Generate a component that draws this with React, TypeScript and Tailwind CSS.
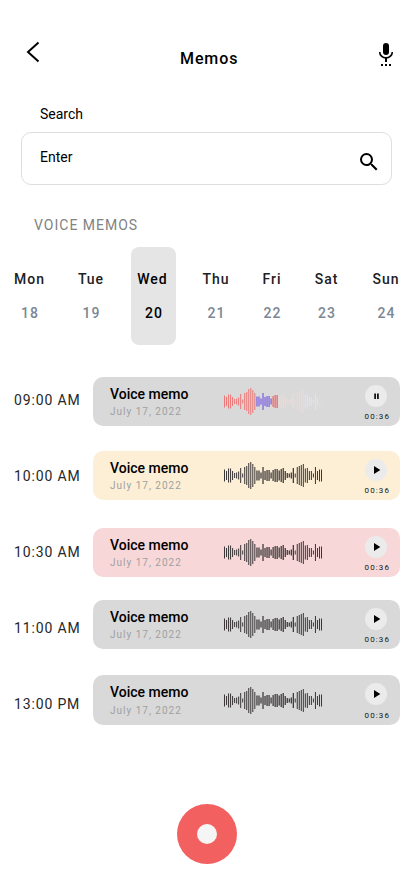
const DAYS = [
  { name: 'Mon', date: '18', place: 'w-[31px]' },
  { name: 'Tue', date: '19', place: 'w-[28px] ml-[32px]' },
  { name: 'Wed', date: '20', place: 'w-[45px] ml-[26px]', active: true },
  { name: 'Thu', date: '21', place: 'w-[28px] ml-[26px]' },
  { name: 'Fri', date: '22', place: 'w-[20px] ml-[32px]' },
  { name: 'Sat', date: '23', place: 'w-[25px] ml-[32px]' },
  { name: 'Sun', date: '24', place: 'w-[28px] ml-[33px]' },
];

const TIMES = ['09:00 AM', '10:00 AM', '10:30 AM', '11:00 AM', '13:00 PM'];

type MemoProps = { style: string; playing?: boolean; tall?: boolean };

const MEMOS: MemoProps[] = [
  { style: 'bg-[#d9d9d9] h-[49px]', playing: true },
  { style: 'bg-[#fcefd6] h-[49px] mt-[25px]' },
  { style: 'bg-[#f8d7d9] h-[49px] mt-[28px]' },
  { style: 'bg-[#d9d9d9] h-[49px] mt-[23px]' },
  { style: 'bg-[#d9d9d9] h-[50px] mt-[26px]', tall: true },
];

const BARS = [
  12, 9, 14, 14, 9, 5, 6, 8, 15, 4, 17, 19, 25, 27, 23, 17, 10, 10, 6, 17, 9, 11, 11, 6, 11,
  13, 13, 10, 13, 15, 9, 5, 4, 6, 15, 4, 17, 19, 21, 23, 14, 15, 9, 9, 4, 17, 9, 12, 12,
];

function barColor(i: number, playing: boolean) {
  if (!playing) return '#3a3637';
  if (i < 16) return '#ec7777';
  if (i < 24) return '#7d62e0';
  if (i < 27) return '#ef6464';
  if (i < 40) return '#ecd9d7';
  if (i < 47) return '#e6defc';
  return '#f0d3d3';
}

function Wave({ playing, tall }: { playing: boolean; tall: boolean }) {
  return (
    <svg width="99" height="28" viewBox="0 0 99 28" className={`ml-[35px] shrink-0 ${tall ? 'mt-[11px]' : 'mt-[10px]'}`}>
      {BARS.map((h, i) => (
        <rect key={i} x={i * 2.0208} y={14.5 - h / 2} width={i > 15 && i < 35 ? 1.25 : 1} height={h} fill={barColor(i, playing)} />
      ))}
    </svg>
  );
}

function Memo({ style, playing = false, tall = false }: MemoProps) {
  return (
    <article className={`flex w-[307px] rounded-[10px] pl-[17px] ${style}`}>
      <div className="w-[79px] shrink-0 whitespace-nowrap pt-[9px]">
        <h3 className="text-[14px] font-medium leading-[17px] text-black">Voice memo</h3>
        <p className={`text-[10px] leading-[12px] tracking-[1px] text-[#a0a0a0] ${tall ? 'mt-[4px]' : 'mt-[3px]'}`}>July 17, 2022</p>
      </div>
      <Wave playing={playing} tall={tall} />
      <div className="ml-[42px] flex w-[28px] flex-col items-start pt-[8px]">
        <button className="flex size-[22px] items-center justify-center rounded-full bg-[#ebebeb]">
          {playing ? (
            <svg width="22" height="22" viewBox="0 0 22 22">
              <path d="M9.2 8.5h1.8v5.5H9.2zM12 8.5h1.8v5.5H12z" fill="#151515" />
            </svg>
          ) : (
            <svg width="22" height="22" viewBox="0 0 22 22">
              <path d="M9 7v8l6.3-4z" fill="#000" />
            </svg>
          )}
        </button>
        <span className={`-ml-[0.4px] text-[8px] leading-[10px] tracking-[1.1px] text-[#151515] ${tall ? 'mt-[6px]' : 'mt-[5px]'}`}>00:36</span>
      </div>
    </article>
  );
}

export default function App() {
  return (
    <main className="h-[895px] w-[417px] overflow-hidden bg-white font-[Roboto,sans-serif] text-black">
      <header className="flex h-[104px] items-start pl-[25px]">
        <button className="mt-[41px]">
          <svg width="16" height="22" viewBox="0 0 16 22" fill="none" stroke="#000" strokeWidth="2">
            <path d="M13.5 1.5 3 11l10.5 9.5" />
          </svg>
        </button>
        <h1 className="ml-[139px] mt-[49px] w-[60px] text-[16px] font-medium leading-[19px] tracking-[0.9px]">Memos</h1>
        <button className="ml-[134px] mt-[42px]">
          <svg width="24" height="25" viewBox="0 0 24 25">
            <rect x="9" y="1" width="6" height="12" rx="3" />
            <path d="M5.7 10a6.3 5.9 0 0 0 12.6 0" fill="none" stroke="#000" strokeWidth="1.6" />
            <path d="M11 16h2v4h-2zM7 22h2v2H7zM11 22h2v2h-2zM15 22h2v2h-2z" />
          </svg>
        </button>
      </header>

      <section className="ml-[21px] w-[371px]">
        <label className="ml-[19px] mt-[2px] block text-[14px] leading-[17px]">Search</label>
        <div className="mt-[9px] flex h-[53px] items-start rounded-[10px] border border-[#dedede] pl-[18px]">
          <span className="mt-[16px] w-[317px] text-[14px] leading-[17px]">Enter</span>
          <svg width="24" height="24" viewBox="0 0 24 24" className="mt-[17px] shrink-0">
            <path d="M15.5 14h-.79l-.28-.27A6.471 6.471 0 0 0 16 9.5 6.5 6.5 0 1 0 9.5 16c1.61 0 3.09-.59 4.23-1.57l.27.28v.79l5 4.99L20.49 19l-4.99-5zm-6 0C7.01 14 5 11.99 5 9.5S7.01 5 9.5 5 14 7.01 14 9.5 11.99 14 9.5 14z" />
          </svg>
        </div>
      </section>

      <h2 className="ml-[34px] mt-[32px] text-[14px] leading-[17px] tracking-[1px] text-[#828282]">VOICE MEMOS</h2>

      <nav className="mt-[13px] flex h-[98px] pl-[14px]">
        {DAYS.map((d) => (
          <div
            key={d.name}
            className={`flex h-[98px] shrink-0 flex-col items-center rounded-[8px] pt-[24px] text-[14px] font-medium leading-[17px] tracking-[1px] ${d.place} ${
              d.active ? 'bg-[#e5e5e5] text-black' : 'text-[#202124]'
            }`}
          >
            <span className={d.active ? '-ml-[2px]' : ''}>{d.name}</span>
            <span className={`ml-[1px] mt-[17px] ${d.active ? 'text-black' : 'text-[#7b8794]'}`}>{d.date}</span>
          </div>
        ))}
      </nav>

      <section className="mt-[32px] flex">
        <div className="ml-[14px] w-[79px] shrink-0 pt-[15px]">
          {TIMES.map((t) => (
            <p key={t} className="mb-[59px] whitespace-nowrap text-[14px] leading-[17px] tracking-[0.85px] text-[#272727] last:mb-0">
              {t}
            </p>
          ))}
        </div>
        <div>
          {MEMOS.map((m, i) => (
            <Memo key={i} {...m} />
          ))}
        </div>
      </section>

      <button className="ml-[177px] mt-[79px] flex size-[60px] items-center justify-center rounded-full bg-[#f26060]">
        <span className="size-[20px] rounded-full bg-[#f5f5f5]" />
      </button>
    </main>
  );
}
